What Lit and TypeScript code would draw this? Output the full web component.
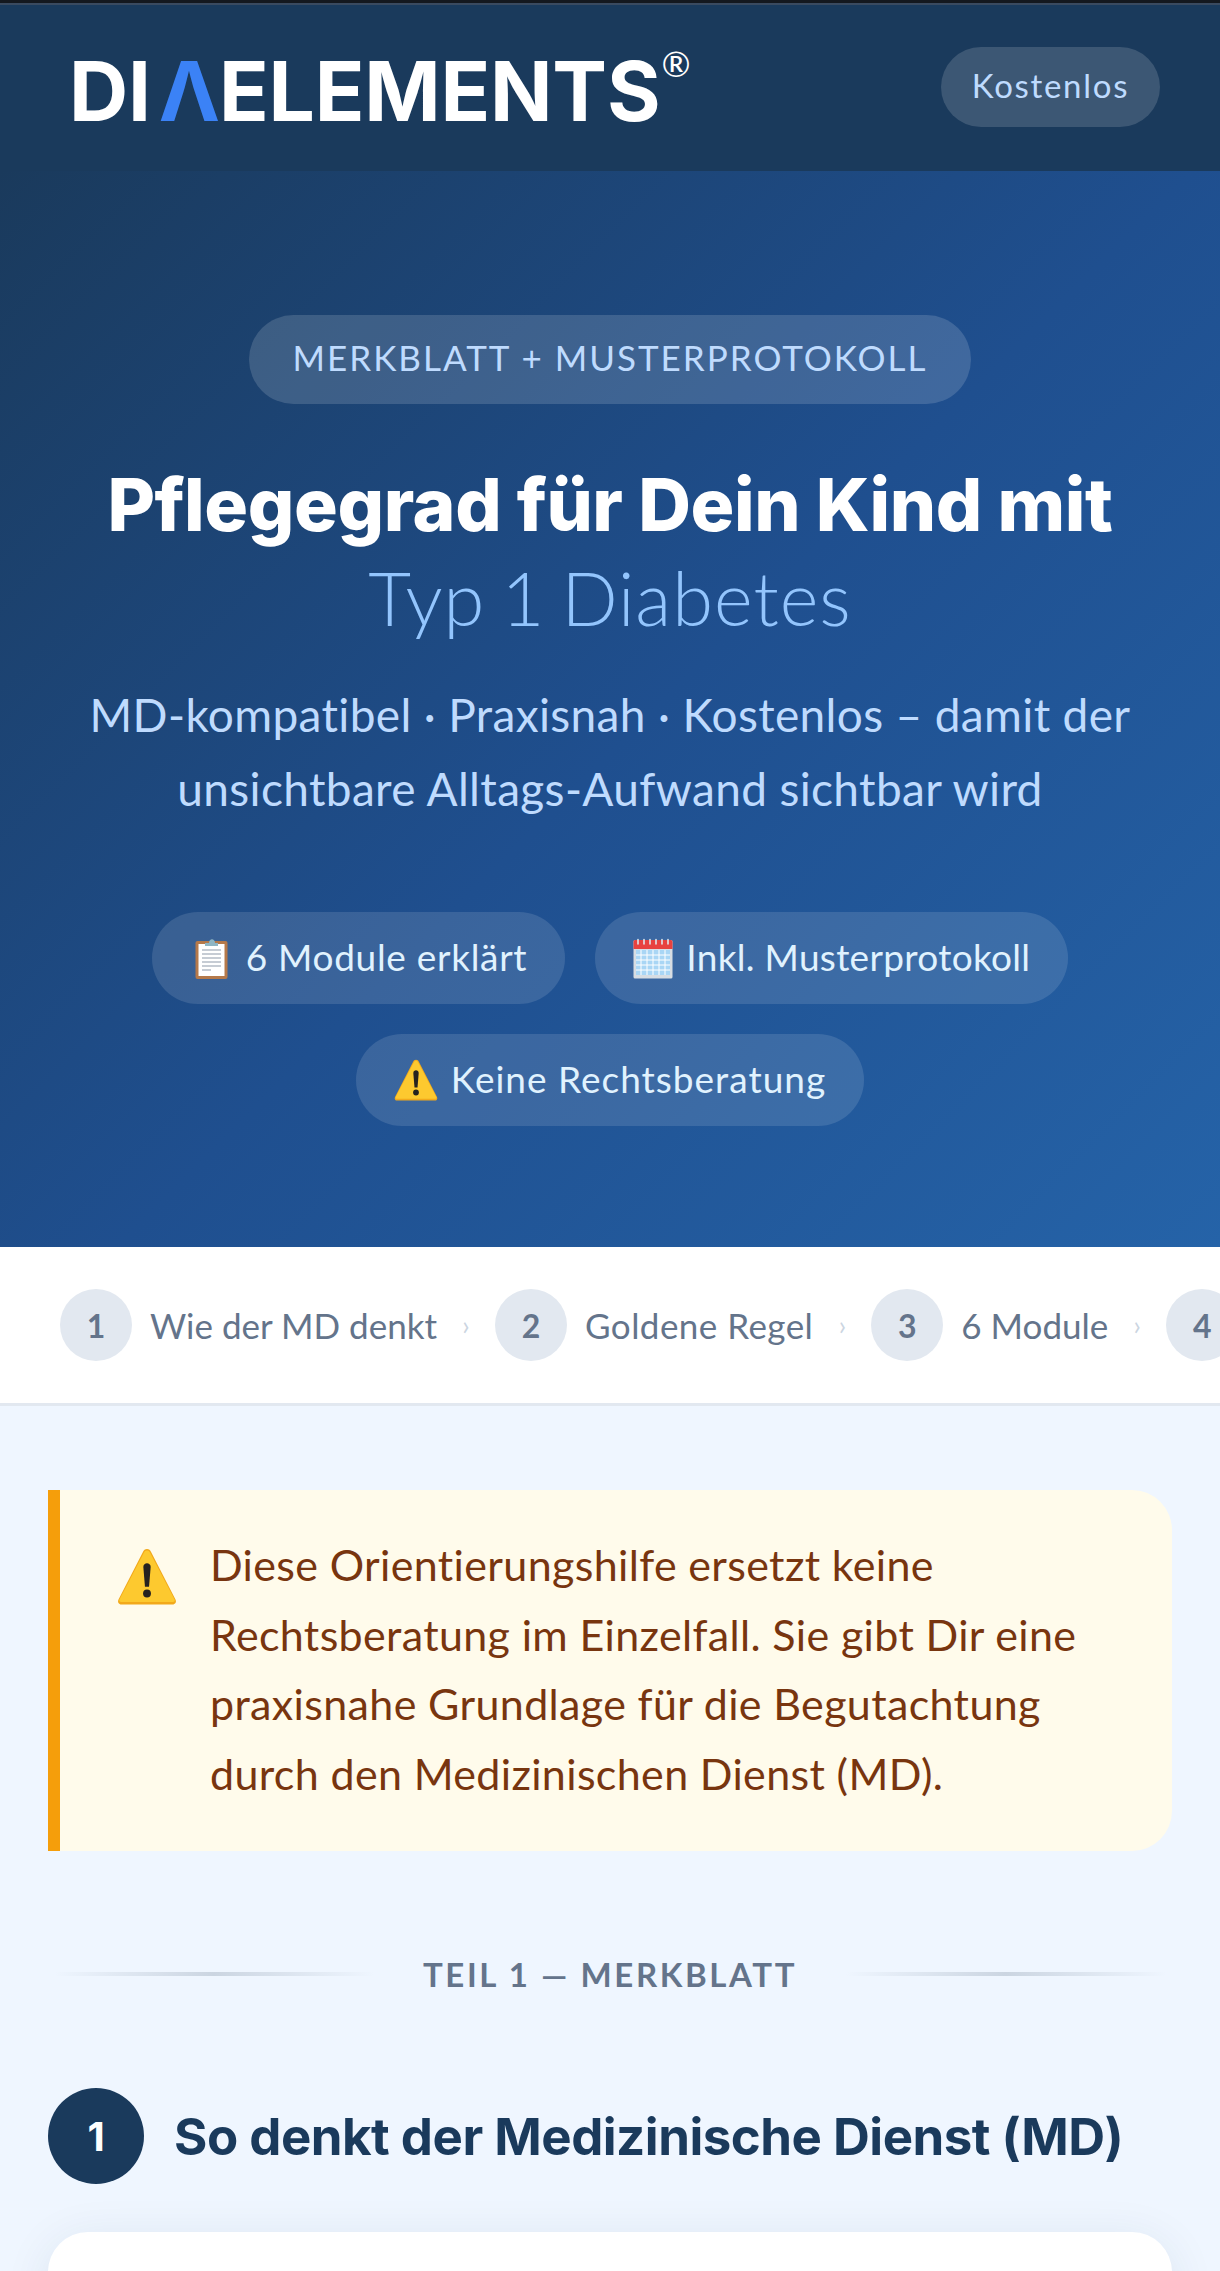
import { LitElement, html, css, svg } from 'lit';
import { customElement } from 'lit/decorators.js';

const clipboardIcon = html`<svg class="ico clip" width="33" height="42" viewBox="0 0 33 42">
  ${svg`<rect x="0.5" y="4" width="32" height="38" rx="2" fill="#b5794a"/>
  <rect x="3.5" y="7" width="26" height="32" fill="#fff"/>
  <path d="M7 13h19M7 17h19M7 21h19M7 25h19M7 29h19M7 33h9" stroke="#b4bcc6" stroke-width="1.4"/>
  <path d="M10 9V6h4c0-5 6-5 6 0h3v3z" fill="#8fb6c4"/>`}
</svg>`;

const calendarIcon = html`<svg class="ico" width="40" height="41" viewBox="0 0 40 41">
  ${svg`<rect x="0.5" y="2" width="39" height="38.5" rx="1.5" fill="#d7dde3"/>
  <path d="M0.5 3.5a1.5 1.5 0 0 1 1.5-1.5h36a1.5 1.5 0 0 1 1.5 1.5V11H.5z" fill="#e8423f"/>
  <rect x="3" y="12" width="34" height="25" fill="#a9d6f5"/>
  <path d="M3 17h34M3 22h34M3 27h34M3 32h34M8 12v25M14 12v25M20 12v25M26 12v25M32 12v25" stroke="#fff" stroke-width="1"/>
  <path d="M5 6V1.5M11 6V1.5M17 6V1.5M23 6V1.5M29 6V1.5M35 6V1.5" stroke="#dfe6ec" stroke-width="1.6" stroke-linecap="round"/>`}
</svg>`;

const warningIcon = (w: number, h: number) => html`<svg class="ico" width=${w} height=${h} viewBox="0 0 44 42">
  ${svg`<path d="M22 .8c1.500 0 2.400.9 3 2.100l18 35c.9 1.900-.2 3.700-2.200 3.700H3.200C1.200 41.600.1 39.800 1 37.900l18-35C19.600 1.700 20.500.8 22 .8z" fill="#f2a91b"/>
  <path d="M22 1.800c1 0 1.700.6 2.200 1.600L42.300 38c.5 1.100 0 1.800-1.300 1.800H3c-1.300 0-1.800-.7-1.300-1.800L19.800 3.400c.5-1 1.200-1.600 2.200-1.600z" fill="#fdc92f"/>
  <path d="M19.300 14c0-3.600 5.400-3.600 5.400 0l-1.200 14.500h-3z" fill="#262220"/>
  <circle cx="22" cy="33.500" r="2.900" fill="#262220"/>`}
</svg>`;

const steps = [
  { n: 1, label: 'Wie der MD denkt', wide: false },
  { n: 2, label: 'Goldene Regel', wide: true },
  { n: 3, label: '6 Module', wide: false },
  { n: 4, label: '', wide: false },
];

@customElement('app-root')
export class AppRoot extends LitElement {
  static styles = css`
    :host {
      display: block;
      height: 2271px;
      overflow: hidden;
      background: #eff6ff;
      font-family: Lato, 'Noto Sans', sans-serif;
    }
    .topline {
      height: 3px;
      background: #14181f;
      border-bottom: 2px solid #3a4a60;
    }
    .header {
      height: 166px;
      background: #1a3a5c;
      display: flex;
      align-items: center;
      justify-content: space-between;
      padding: 0 60px 0 69px;
      box-sizing: border-box;
    }
    .logo {
      display: flex;
      align-items: flex-start;
      color: #fff;
      font-family: Inter, sans-serif;
      font-weight: 700;
      font-size: 82px;
      line-height: 84px;
      letter-spacing: -0.2px;
      margin-top: 7px;
    }
    .logo .lam {
      color: #3b82f6;
      margin: 0 -1px 0 8px;
    }
    .logo sup {
      font-family: Lato, sans-serif;
      font-size: 35px;
      line-height: 37px;
      font-weight: 400;
      margin: -5px 0 0 1px;
    }
    .free {
      height: 80px;
      width: 219px;
      border-radius: 40px;
      margin-bottom: 2px;
      padding-bottom: 4px;
      box-sizing: border-box;
      background: rgba(255, 255, 255, 0.15);
      color: #bfdbfe;
      font-size: 33px;
      letter-spacing: 1.7px;
      display: flex;
      align-items: center;
      justify-content: center;
    }
    .hero {
      height: 1076px;
      box-sizing: border-box;
      padding-top: 144px;
      background: linear-gradient(135deg, #1a3a5c 0%, #1f4f8f 52%, #2563a8 100%);
      display: flex;
      flex-direction: column;
      align-items: center;
      text-align: center;
    }
    .badge {
      height: 89px;
      width: 722px;
      box-sizing: border-box;
      padding-bottom: 5px;
      border-radius: 45px;
      background: rgba(255, 255, 255, 0.15);
      color: #bfdbfe;
      font-size: 35px;
      letter-spacing: 2px;
      display: flex;
      align-items: center;
      justify-content: center;
    }
    h1 {
      margin: 54px 0 0;
      font-family: Inter, sans-serif;
      font-size: 73px;
      line-height: 93px;
      font-weight: 800;
      color: #fff;
      letter-spacing: -0.4px;
    }
    h1 span {
      display: block;
      font-family: Lato, sans-serif;
      font-size: 74px;
      font-weight: 300;
      color: #93c5fd;
      letter-spacing: 1px;
      word-spacing: -5px;
    }
    .sub {
      margin: 34px 0 0;
      font-size: 46px;
      line-height: 74px;
      font-weight: 400;
      color: #bfdbfe;
      letter-spacing: 0.35px;
    }
    .chips {
      margin-top: 86px;
      width: 960px;
      display: flex;
      flex-wrap: wrap;
      justify-content: center;
      gap: 30px;
    }
    .chip {
      height: 92px;
      box-sizing: border-box;
      border-radius: 46px;
      background: rgba(255, 255, 255, 0.12);
      color: #e0f2fe;
      font-size: 37px;
      display: flex;
      align-items: center;
      gap: 13px;
      padding: 0 38px 4px 38px;
    }
    .chip .ico {
      margin-top: 4px;
    }
    .chip.c1 {
      letter-spacing: 0.7px;
    }
    .chip.c2 {
      letter-spacing: 0.3px;
    }
    .chip.c3 {
      letter-spacing: 1px;
    }
    .ico {
      display: block;
      flex: none;
    }
    .clip {
      margin: 0 5px 0 5px;
    }
    .steps {
      height: 159px;
      box-sizing: border-box;
      background: #fff;
      border-bottom: 3px solid #e2e8f0;
      display: flex;
      align-items: center;
      padding: 0 0 0 60px;
      white-space: nowrap;
      overflow: hidden;
    }
    .step {
      display: flex;
      align-items: center;
      gap: 18px;
      flex: none;
    }
    .dot {
      width: 72px;
      height: 72px;
      border-radius: 50%;
      background: #e2e8f0;
      color: #64748b;
      font-weight: 700;
      font-size: 32px;
      display: flex;
      align-items: center;
      justify-content: center;
    }
    .step-label {
      color: #64748b;
      font-size: 35px;
    }
    .step-label.wide {
      letter-spacing: 0.45px;
    }
    .chev {
      color: #cbd5e1;
      font-size: 26px;
      width: 58px;
      text-align: center;
      flex: none;
    }
    .main {
      padding: 84px 48px 0;
    }
    .warn {
      display: flex;
      gap: 33px;
      height: 361px;
      box-sizing: border-box;
      padding: 58px 40px 0 57px;
      background: #fffbeb;
      border-left: 12px solid #f59e0b;
      border-radius: 0 40px 40px 0;
    }
    .warn p {
      margin: -18px 0 0;
      color: #78350f;
      font-size: 43px;
      line-height: 69.5px;
      letter-spacing: 0.35px;
    }
    .divider {
      display: flex;
      align-items: center;
      justify-content: space-between;
      margin: 103px 6px 0;
      color: #64748b;
      font-size: 33px;
      font-weight: 700;
      letter-spacing: 2.6px;
      line-height: 40px;
    }
    .divider i {
      display: block;
      width: 320px;
      height: 4px;
      background: linear-gradient(90deg, transparent, #cbd5e1, transparent);
    }
    .section {
      display: flex;
      align-items: center;
      gap: 30px;
      margin-top: 94px;
    }
    .num {
      width: 96px;
      height: 96px;
      border-radius: 50%;
      background: #1a3a5c;
      color: #fff;
      font-family: Inter, sans-serif;
      font-weight: 700;
      font-size: 40px;
      display: flex;
      align-items: center;
      justify-content: center;
      flex: none;
    }
    h2 {
      margin: 0;
      color: #1a3a5c;
      font-family: Inter, sans-serif;
      font-size: 51px;
      font-weight: 700;
      letter-spacing: -0.5px;
    }
    .card {
      margin-top: 48px;
      height: 300px;
      background: #fff;
      border-radius: 40px;
      box-shadow: 0 8px 48px rgba(26, 58, 92, 0.09);
    }
  `;

  render() {
    return html`
      <div class="topline"></div>
      <header class="header">
        <div class="logo">DI<span class="lam">Λ</span>ELEMENTS<sup>®</sup></div>
        <div class="free">Kostenlos</div>
      </header>
      <section class="hero">
        <div class="badge">MERKBLATT + MUSTERPROTOKOLL</div>
        <h1>Pflegegrad für Dein Kind mit<span>Typ 1 Diabetes</span></h1>
        <p class="sub">MD-kompatibel · Praxisnah · Kostenlos – damit der<br />unsichtbare Alltags-Aufwand sichtbar wird</p>
        <div class="chips">
          <div class="chip c1">${clipboardIcon}6 Module erklärt</div>
          <div class="chip c2">${calendarIcon}Inkl. Musterprotokoll</div>
          <div class="chip c3">${warningIcon(44, 42)}Keine Rechtsberatung</div>
        </div>
      </section>
      <nav class="steps">
        ${steps.map(
          (s, i) => html`
            <div class="step">
              <div class="dot">${s.n}</div>
              ${s.label ? html`<div class="step-label ${s.wide ? 'wide' : ''}">${s.label}</div>` : ''}
            </div>
            ${i < steps.length - 1 ? html`<div class="chev">›</div>` : ''}
          `
        )}
      </nav>
      <main class="main">
        <div class="warn">
          ${warningIcon(60, 57)}
          <p>Diese Orientierungshilfe ersetzt keine<br />Rechtsberatung im Einzelfall. Sie gibt Dir eine<br />praxisnahe Grundlage für die Begutachtung<br />durch den Medizinischen Dienst (MD).</p>
        </div>
        <div class="divider"><i></i><span>TEIL 1 — MERKBLATT</span><i></i></div>
        <div class="section">
          <div class="num">1</div>
          <h2>So denkt der Medizinische Dienst (MD)</h2>
        </div>
        <div class="card"></div>
      </main>
    `;
  }
}
